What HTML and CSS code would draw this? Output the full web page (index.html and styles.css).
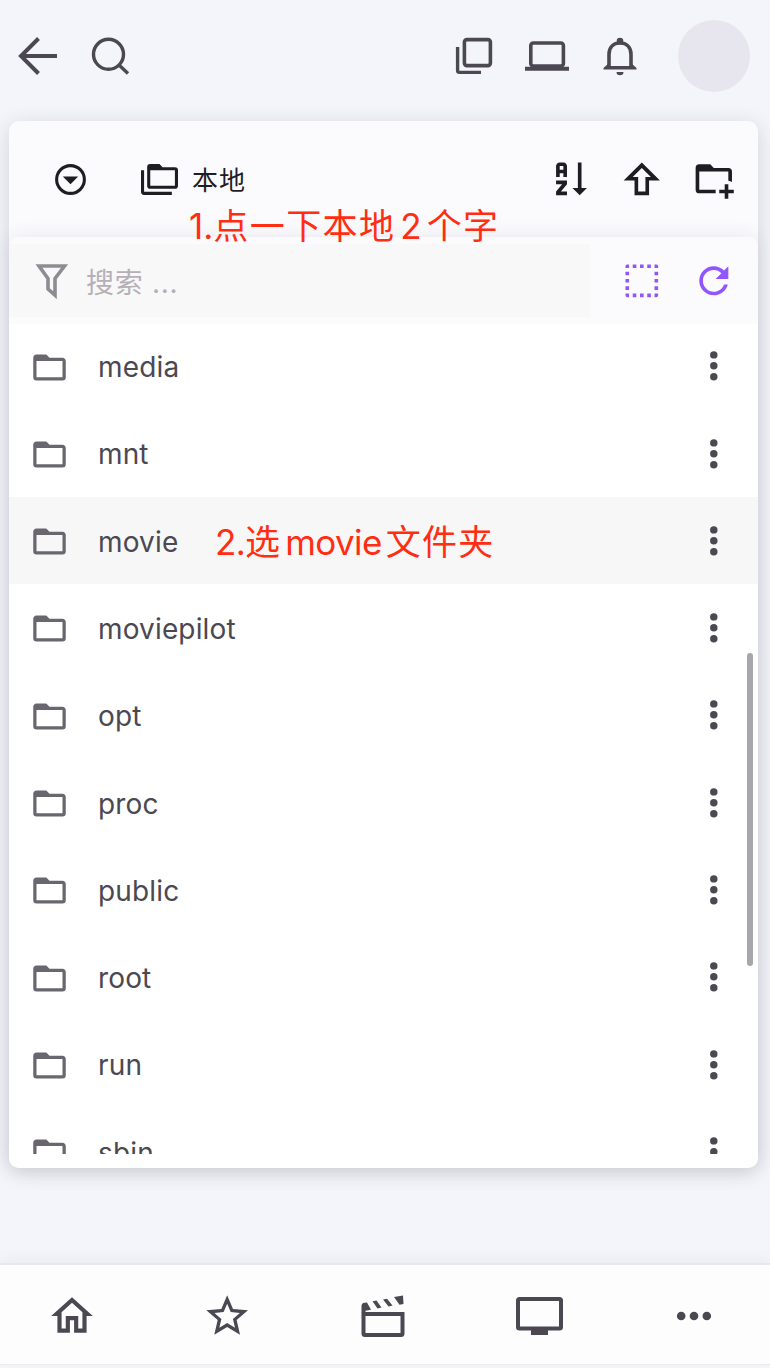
FILE: index.html
```html
<!DOCTYPE html>
<html lang="zh-CN">

<head>
    <meta charset="UTF-8">
    <meta name="viewport" content="width=device-width, initial-scale=1.0">
    <title>文件管理</title>
    <link rel="stylesheet" href="styles.css">
</head>

<body>

    <svg class="sprite">
        <symbol id="folder" viewBox="0 0 24 24">
            <path d="M20,18H4V8H20M20,6H12L10,4H4C2.89,4 2,4.89 2,6V18A2,2 0 0,0 4,20H20A2,2 0 0,0 22,18V8C22,6.89 21.1,6 20,6Z" />
        </symbol>
        <symbol id="dots" viewBox="0 0 24 24">
            <circle cx="12" cy="6" r="2.05" />
            <circle cx="12" cy="12" r="2.05" />
            <circle cx="12" cy="18" r="2.05" />
        </symbol>
    </svg>

    <header class="header">
        <svg class="line back" viewBox="0 0 44 44">
            <path d="M22.5 4.5L5 22L22.5 39.5M5 22H41" stroke-width="4" />
        </svg>
        <svg class="line find" viewBox="0 0 44 44">
            <circle cx="20.5" cy="20.3" r="15" stroke-width="3.4" />
            <path d="M31 31L40 39.5" stroke-width="3.4" />
        </svg>
        <div class="header-right">
            <svg class="line" viewBox="0 0 44 44">
                <rect x="12.4" y="5.6" width="26" height="26" rx="2.5" stroke-width="3.6" />
                <path d="M5.6 13V36.5Q5.6 38.4 7.5 38.4H29" stroke-width="3.4" />
            </svg>
            <svg class="line" viewBox="0 0 44 44">
                <rect x="5.8" y="9" width="32.6" height="23" rx="2.5" stroke-width="3.6" />
                <path d="M0 34.8H44" stroke-width="4" />
            </svg>
            <svg class="line" viewBox="0 0 44 44">
                <path d="M11 33.5V20.5C11 13 15.5 9 22 9S33 13 33 20.5V33.5" stroke-width="3.6" />
                <path class="solid" d="M5.5 35.6V34L10.5 29.5V32H33.5V29.5L38.5 34V35.6ZM18.5 38H25.5A3.5 3.2 0 0 1 18.5 38Z" />
                <circle class="solid" cx="22" cy="7" r="3.3" />
            </svg>
        </div>
        <div class="avatar"></div>
    </header>

    <main class="card">

        <div class="toolbar">
            <svg class="icon small" viewBox="0 0 24 24">
                <path d="M12,2A10,10 0 0,0 2,12A10,10 0 0,0 12,22A10,10 0 0,0 22,12A10,10 0 0,0 12,2M12,4A8,8 0 0,1 20,12A8,8 0 0,1 12,20A8,8 0 0,1 4,12A8,8 0 0,1 12,4M7,10L12,15L17,10H7Z" />
            </svg>
            <div class="storage">
                <svg class="icon small" viewBox="0 0 24 24">
                    <path d="M22,4A2,2 0 0,1 24,6V16A2,2 0 0,1 22,18H6A2,2 0 0,1 4,16V4A2,2 0 0,1 6,2H12L14,4H22M2,6V20H20V22H2A2,2 0 0,1 0,20V11H0V6H2M6,6V16H22V6H6Z" />
                </svg>
                <span>本地</span>
            </div>
            <div class="actions">
                <svg class="icon" viewBox="0 0 24 24">
                    <path d="M19 17H22L18 21L14 17H17V3H19M11 13V15L7.67 19H11V21H5V19L8.33 15H5V13M9 3H7C5.9 3 5 3.9 5 5V11H7V9H9V11H11V5C11 3.9 10.11 3 9 3M9 7H7V5H9Z" />
                </svg>
                <svg class="icon" viewBox="0 0 24 24">
                    <path d="M16,13V21H8V13H2L12,3L22,13H16M7,11H10V19H14V11H17L12,6L7,11Z" />
                </svg>
                <svg class="icon" viewBox="0 0 24 24">
                    <path d="M13 19C13 19.34 13.04 19.67 13.09 20H4A2 2 0 0 1 2 18V6A2 2 0 0 1 4 4H10L12 6H20A2 2 0 0 1 22 8V13.81C21.39 13.46 20.72 13.22 20 13.09V8H4V18H13.09C13.04 18.33 13 18.66 13 19M20 18V15H18V18H15V20H18V23H20V20H23V18H20Z" />
                </svg>
            </div>
        </div>

        <div class="panel">
            <div class="filter">
                <div class="filter-input">
                    <svg class="funnel" viewBox="0 0 34 36">
                        <path d="M4 3H29.5L20 15.5V32.2L13 26V15.5Z" />
                    </svg>
                    <span>搜索 ...</span>
                </div>
                <div class="actions purple">
                    <svg class="icon" viewBox="0 0 24 24">
                        <path d="M4,3H5V5H3V4A1,1 0 0,1 4,3M20,3A1,1 0 0,1 21,4V5H19V3H20M15,5V3H17V5H15M11,5V3H13V5H11M7,5V3H9V5H7M21,20A1,1 0 0,1 20,21H19V19H21V20M15,21V19H17V21H15M11,21V19H13V21H11M7,21V19H9V21H7M4,21A1,1 0 0,1 3,20V19H5V21H4M3,15H5V17H3V15M21,15V17H19V15H21M3,11H5V13H3V11M21,11V13H19V11H21M3,7H5V9H3V7M21,7V9H19V7H21Z" />
                    </svg>
                    <svg class="icon" viewBox="0 0 24 24">
                        <path d="M17.65,6.35C16.2,4.9 14.21,4 12,4A8,8 0 0,0 4,12A8,8 0 0,0 12,20C15.73,20 18.84,17.45 19.73,14H17.65C16.83,16.33 14.61,18 12,18A6,6 0 0,1 6,12A6,6 0 0,1 12,6C13.66,6 15.14,6.69 16.22,7.78L13,11H20V4L17.65,6.35Z" />
                    </svg>
                </div>
            </div>

            <ul class="list">
                <li class="item"><svg class="folder"><use href="#folder" /></svg><span>media</span><svg class="icon more"><use href="#dots" /></svg></li>
                <li class="item"><svg class="folder"><use href="#folder" /></svg><span>mnt</span><svg class="icon more"><use href="#dots" /></svg></li>
                <li class="item active"><svg class="folder"><use href="#folder" /></svg><span>movie</span><svg class="icon more"><use href="#dots" /></svg></li>
                <li class="item"><svg class="folder"><use href="#folder" /></svg><span>moviepilot</span><svg class="icon more"><use href="#dots" /></svg></li>
                <li class="item"><svg class="folder"><use href="#folder" /></svg><span>opt</span><svg class="icon more"><use href="#dots" /></svg></li>
                <li class="item"><svg class="folder"><use href="#folder" /></svg><span>proc</span><svg class="icon more"><use href="#dots" /></svg></li>
                <li class="item"><svg class="folder"><use href="#folder" /></svg><span>public</span><svg class="icon more"><use href="#dots" /></svg></li>
                <li class="item"><svg class="folder"><use href="#folder" /></svg><span>root</span><svg class="icon more"><use href="#dots" /></svg></li>
                <li class="item"><svg class="folder"><use href="#folder" /></svg><span>run</span><svg class="icon more"><use href="#dots" /></svg></li>
                <li class="item"><svg class="folder"><use href="#folder" /></svg><span>sbin</span><svg class="icon more"><use href="#dots" /></svg></li>
            </ul>
        </div>

        <div class="scrollbar"></div>
        <div class="note note-one"><b>1.</b>点一下本地<i>2</i>个字</div>
        <div class="note note-two"><b>2.</b>选<i>movie</i>文件夹</div>
    </main>

    <nav class="nav">
        <svg class="tab" viewBox="0 0 24 24">
            <path d="M12 5.69L17 10.19V18H15V12H9V18H7V10.19L12 5.69M12 3L2 12H5V20H11V14H13V20H19V12H22" />
        </svg>
        <svg class="tab" viewBox="0.4 0 24 24">
            <path d="M12,15.39L8.24,17.66L9.23,13.38L5.91,10.5L10.29,10.13L12,6.09L13.71,10.13L18.09,10.5L14.77,13.38L15.76,17.66M22,9.24L14.81,8.63L12,2L9.19,8.63L2,9.24L7.45,13.97L5.82,21L12,17.27L18.18,21L16.54,13.97L22,9.24Z" />
        </svg>
        <svg class="tab" viewBox="-0.5 -0.5 50 50">
            <path fill-rule="evenodd" d="M3 20.5H46V42Q46 45.5 42.5 45.5H6.5Q3 45.5 3 42ZM7 24.5V41.5H42V24.5Z" />
            <path d="M3 20V14.5Q3 11.5 6 11.2L8.5 11L12.5 18.2L7 19.2V21H3ZM14 9.8L18 9L23 16L19 16.9ZM24.5 8L28.5 7.2L34 14L30 14.9ZM35.5 5.5L44.5 4L45 12.5L41 13.2Z" />
        </svg>
        <svg class="tab" viewBox="-0.5 0 50 50">
            <path fill-rule="evenodd" d="M5 6H45Q48.5 6 48.5 9.5V36Q48.5 39.5 45 39.5H33.5V44H16.5V39.5H5Q1.5 39.5 1.5 36V9.5Q1.5 6 5 6ZM5.5 10V35.5H44.5V10Z" />
        </svg>
        <svg class="tab" viewBox="0 0 50 50">
            <circle cx="12.2" cy="25" r="4.3" />
            <circle cx="25" cy="25" r="4.3" />
            <circle cx="37.8" cy="25" r="4.3" />
        </svg>
    </nav>

</body>

</html>
```

FILE: styles.css
```css
* {
    margin: 0;
    padding: 0;
    box-sizing: border-box;
    list-style: none;
}

body {
    display: flex;
    flex-direction: column;
    height: 1368px;
    overflow: hidden;
    background-color: #f4f5fa;
    color: #4b4852;
    font-family: Inter, "Noto Sans CJK SC", sans-serif;
}

svg {
    display: block;
    flex: none;
    fill: currentColor;
}

.sprite {
    position: absolute;
    width: 0;
    height: 0;
}

/* 顶部栏 */
.header {
    display: flex;
    align-items: center;
    height: 111px;
    padding: 0 20px 0 16px;
}

.line {
    width: 44px;
    height: 44px;
    fill: none;
    stroke: currentColor;
}

.line .solid {
    fill: currentColor;
    stroke: none;
}

.find {
    margin-left: 28px;
}

.header-right {
    display: flex;
    gap: 29px;
    margin-left: auto;
}

.avatar {
    width: 72px;
    height: 72px;
    margin-left: 36px;
    border-radius: 50%;
    background-color: #e7e6ee;
}

/* 文件卡片 */
.card {
    position: relative;
    width: 749px;
    height: 1047px;
    margin: 10px 0 0 9px;
    border-radius: 10px;
    background-color: #fbfbfe;
    box-shadow: 0 4px 20px rgba(47, 43, 61, .17);
}

.toolbar {
    display: flex;
    align-items: center;
    height: 116px;
    padding: 0 22px 0 43px;
    color: #1f1d23;
}

.icon {
    width: 43.6px;
    height: 43.6px;
}

.small {
    width: 37px;
    height: 37px;
}

.storage {
    display: flex;
    align-items: center;
    gap: 14px;
    margin-left: 52px;
    font-size: 26px;
    letter-spacing: 1px;
}

.storage span {
    padding-bottom: 2px;
}

.actions {
    display: flex;
    gap: 29px;
    margin-left: auto;
}

.purple {
    color: #9155fd;
}

.panel {
    height: 931px;
    border-radius: 10px;
    background-color: #fff;
    box-shadow: 0 0 20px rgba(47, 43, 61, .09);
}

.filter {
    display: flex;
    align-items: center;
    height: 87px;
    padding-right: 22px;
    border-radius: 10px 10px 0 0;
    background-color: #fbfbfe;
}

.filter-input {
    display: flex;
    align-items: center;
    gap: 17px;
    width: 581px;
    height: 73px;
    padding-left: 26px;
    background-color: #f8f8f8;
    color: #b5b0b7;
    font-size: 28px;
    letter-spacing: .7px;
}

.filter .icon {
    margin-top: 1px;
}

.funnel {
    width: 34px;
    height: 36px;
    margin-top: 1px;
    fill: none;
    stroke: #8e8b93;
    stroke-width: 3.6;
}

.list {
    height: 830px;
    overflow: hidden;
}

.item {
    display: flex;
    align-items: center;
    height: 87.3px;
    padding: 0 22px 0 21px;
    font-size: 28px;
    letter-spacing: .15px;
}

.item span {
    margin-left: 29px;
    padding-top: 2px;
}

/* 列表处于滚动状态 */
.item:first-child {
    margin-top: -1.6px;
}

.active {
    background-color: #f7f7f7;
}

.folder {
    width: 39px;
    height: 39px;
    margin-top: 2px;
    color: #69666f;
}

.more {
    margin-left: auto;
}

.scrollbar {
    position: absolute;
    top: 532px;
    right: 5px;
    width: 6px;
    height: 313px;
    border-radius: 3px;
    background-color: #a8a5ab;
}

/* 红色标注 */
.note {
    position: absolute;
    color: #ff2d12;
    font-size: 35px;
    line-height: 50px;
    letter-spacing: 1.4px;
    white-space: nowrap;
}

.note b,
.note i {
    font-style: normal;
    font-weight: 400;
    letter-spacing: 0;
}

.note i {
    margin: 0 5px;
}

.note-one {
    top: 80px;
    left: 180px;
}

.note-two {
    top: 396px;
    left: 206px;
    letter-spacing: 1.2px;
}

.note-two b {
    letter-spacing: -.7px;
}

.note-two i {
    margin: 0 4px;
    letter-spacing: -.6px;
}

/* 底部导航 */
.nav {
    display: flex;
    justify-content: space-between;
    align-items: center;
    height: 102px;
    margin-top: auto;
    margin-bottom: 3px;
    padding: 2px 51px 0 47px;
    border-top: 2px solid #e8e7ee;
    border-bottom: 1px solid #ebeaf1;
    background-color: #fdfdfe;
    box-shadow: 0 0 16px rgba(47, 43, 61, .07), 0 4px 0 #f9f9fb;
}

.tab {
    width: 50px;
    height: 50px;
}
```
